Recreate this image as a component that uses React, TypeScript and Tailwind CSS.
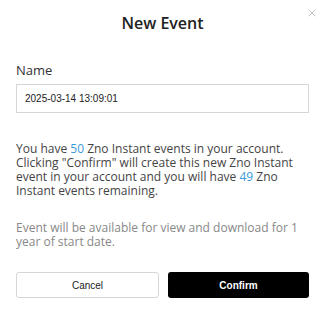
import { X } from "lucide-react";

const gotham = { fontFamily: '"Open Sans", "Liberation Sans", sans-serif' };
const arial = { fontFamily: '"Liberation Sans", Arial, sans-serif' };

export default function App() {
  return (
    <div className="h-[310px] w-[325px] bg-white text-[#333]" style={gotham}>
      <div className="relative px-4 pt-[12px]">
        <h2 className="text-center text-[16px] font-semibold leading-[22px] text-[#222]">
          New Event
        </h2>
        <button
          type="button"
          className="absolute right-[7px] top-[7px] text-[#999]"
          aria-label="Close"
        >
          <X size={12} strokeWidth={1.2} />
        </button>

        <label className="mt-[27px] block text-[13px] leading-[18px] text-[#333]">
          Name
        </label>
        <input
          defaultValue="2025-03-14 13:09:01"
          className="mt-[5px] h-[29px] w-full border border-[#d6d6d6] px-[8px] text-[10px] text-[#222] outline-none"
          style={arial}
        />

        <p className="mt-[29px] text-[12px] leading-[14px] text-[#444]">
          You have <span className="text-[#3a9ad9]">50</span> Zno Instant events in your account.
          Clicking "Confirm" will create this new Zno Instant event in your account and you will
          have <span className="text-[#3a9ad9]">49</span> Zno Instant events remaining.
        </p>

        <p className="mt-[23px] text-[12px] leading-[14px] text-[#888]">
          Event will be available for view and download for 1 year of start date.
        </p>

        <div className="mt-[23px] flex gap-[9px] text-[10px]" style={arial}>
          <button
            type="button"
            className="h-[26px] flex-1 rounded-[3px] border border-[#d6d6d6] bg-white text-[#222]"
          >
            Cancel
          </button>
          <button
            type="button"
            className="h-[26px] flex-1 rounded-[3px] bg-black font-bold text-white"
          >
            Confirm
          </button>
        </div>
      </div>
    </div>
  );
}
